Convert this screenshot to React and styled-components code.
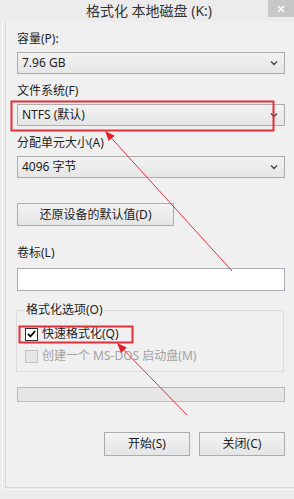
import React from 'react';
import styled, { createGlobalStyle } from 'styled-components';

const GlobalStyle = createGlobalStyle`
  html, body {
    margin: 0;
    padding: 0;
    background: #ececec;
  }
  body {
    font-family: "Noto Sans", "Noto Sans CJK SC", sans-serif;
    font-size: 12px;
    color: #1e1e1e;
  }
`;

const Window = styled.div`
  position: relative;
  width: 294px;
  height: 499px;
  background: #ececec;
  overflow: hidden;
`;

const TitleBar = styled.div`
  display: grid;
  grid-template-columns: 1fr auto 1fr;
  align-items: start;
  height: 22px;
`;

const Title = styled.div`
  grid-column: 2;
  font-size: 14px;
  line-height: 22px;
  color: #333;
  white-space: nowrap;
  padding-left: 4px;
`;

const CloseButton = styled.div`
  grid-column: 3;
  justify-self: end;
  width: 26px;
  height: 17px;
  background: #c7c7c7;
  color: #fff;
  display: flex;
  align-items: center;
  justify-content: center;
`;

const Frame = styled.div`
  margin-left: 2px;
  height: 467px;
  border-left: 1px solid #f8f8f8;
  border-bottom: 1px solid #f8f8f8;
  padding-left: 2px;
`;

const Panel = styled.div`
  height: 465px;
  background: #f0f0f0;
  border-left: 1px solid #d8d8d8;
  border-bottom: 1px solid #d8d8d8;
  padding: 0 9px 0 11px;
  display: flex;
  flex-direction: column;
`;

const Label = styled.div`
  line-height: 16px;
  margin-top: ${(p) => p.$top || 9}px;
  white-space: nowrap;
`;

const Select = styled.div`
  margin-top: 5px;
  height: 22px;
  box-sizing: border-box;
  border: 1px solid #acacac;
  background: linear-gradient(#f2f2f2, #e6e6e6);
  display: flex;
  align-items: center;
  justify-content: space-between;
  padding: 0 6px 0 4px;
  line-height: 16px;
`;

const Button = styled.div`
  width: ${(p) => p.$width}px;
  height: ${(p) => p.$height || 24}px;
  box-sizing: border-box;
  border: 1px solid #acacac;
  background: linear-gradient(#f2f2f2, #e5e5e5);
  display: flex;
  align-items: center;
  justify-content: center;
  line-height: 16px;
  white-space: nowrap;
`;

const ResetRow = styled.div`
  margin-top: 25px;
`;

const TextInput = styled.input`
  margin-top: 7px;
  height: 23px;
  box-sizing: border-box;
  border: 1px solid #abadb3;
  background: #fff;
  outline: none;
  padding: 0 4px;
  font: inherit;
`;

const Group = styled.fieldset`
  margin: 11px 1px 0 -1px;
  padding: 0 0 4px 8px;
  border: 1px solid #dcdcdc;
  min-width: 0;
`;

const Legend = styled.legend`
  padding: 0 1px;
  line-height: 16px;
`;

const CheckRow = styled.div`
  display: flex;
  align-items: center;
  gap: 4px;
  height: 22px;
  margin-top: ${(p) => p.$top || 0}px;
  color: ${(p) => (p.$disabled ? '#a3a3a3' : '#1e1e1e')};
  white-space: nowrap;
  line-height: 16px;
`;

const Box = styled.div`
  width: 13px;
  height: 13px;
  box-sizing: border-box;
  border: 1px solid ${(p) => (p.$disabled ? '#c4c4c4' : '#333')};
  background: ${(p) => (p.$disabled ? '#e6e6e6' : '#fff')};
  display: flex;
  align-items: center;
  justify-content: center;
`;

const Progress = styled.div`
  margin-top: 15px;
  height: 15px;
  box-sizing: border-box;
  border: 1px solid #bcbcbc;
  background: #e6e6e6;
`;

const Actions = styled.div`
  margin-top: 30px;
  display: flex;
  justify-content: flex-end;
  gap: 9px;
`;

const Overlay = styled.svg`
  position: absolute;
  left: 0;
  top: 0;
  pointer-events: none;
`;

function Chevron() {
  return (
    <svg width="8" height="6" viewBox="0 0 8 6">
      <path d="M1 1.5 L4 4.5 L7 1.5" fill="none" stroke="#444" strokeWidth="1.4" />
    </svg>
  );
}

function Combo({ value }) {
  return (
    <Select>
      <span>{value}</span>
      <Chevron />
    </Select>
  );
}

function Arrow({ x1, y1, x2, y2 }) {
  const a = Math.atan2(y2 - y1, x2 - x1);
  const len = 10;
  const w = 4;
  const bx = x2 - len * Math.cos(a);
  const by = y2 - len * Math.sin(a);
  const px = -Math.sin(a) * w;
  const py = Math.cos(a) * w;
  return (
    <g>
      <line x1={x1} y1={y1} x2={bx} y2={by} stroke="#d9363e" strokeWidth="1" />
      <polygon
        points={`${x2},${y2} ${bx + px},${by + py} ${bx - px},${by - py}`}
        fill="#e0202a"
      />
    </g>
  );
}

export default function App() {
  return (
    <>
      <GlobalStyle />
      <Window>
        <TitleBar>
          <Title>格式化 本地磁盘 (K:)</Title>
          <CloseButton>
            <svg width="8" height="8" viewBox="0 0 8 8">
              <path d="M1 1 L7 7 M7 1 L1 7" stroke="#fff" strokeWidth="1.6" />
            </svg>
          </CloseButton>
        </TitleBar>
        <Frame>
          <Panel>
            <Label $top={9}>容量(P):</Label>
            <Combo value="7.96 GB" />
            <Label>文件系统(F)</Label>
            <Combo value="NTFS (默认)" />
            <Label>分配单元大小(A)</Label>
            <Combo value="4096 字节" />
            <ResetRow>
              <Button $width={157} $height={23}>还原设备的默认值(D)</Button>
            </ResetRow>
            <Label $top={19}>卷标(L)</Label>
            <TextInput defaultValue="" />
            <Group>
              <Legend>格式化选项(O)</Legend>
              <CheckRow $top={5}>
                <Box>
                  <svg width="9" height="8" viewBox="0 0 9 8">
                    <path d="M1 4 L3.5 6.5 L8 1" fill="none" stroke="#000" strokeWidth="1.8" />
                  </svg>
                </Box>
                快速格式化(Q)
              </CheckRow>
              <CheckRow $disabled>
                <Box $disabled />
                创建一个 MS-DOS 启动盘(M)
              </CheckRow>
            </Group>
            <Progress />
            <Actions>
              <Button $width={86}>开始(S)</Button>
              <Button $width={86}>关闭(C)</Button>
            </Actions>
          </Panel>
        </Frame>
        <Overlay width="294" height="499" viewBox="0 0 294 499">
          <rect x="11.5" y="101.5" width="262" height="29" fill="none" stroke="#e0303a" strokeWidth="2" />
          <rect x="19.5" y="326.5" width="113" height="16" fill="none" stroke="#e0303a" strokeWidth="2" />
          <Arrow x1={232} y1={271} x2={105} y2={131} />
          <Arrow x1={187} y1={415} x2={117} y2={343} />
        </Overlay>
      </Window>
    </>
  );
}
